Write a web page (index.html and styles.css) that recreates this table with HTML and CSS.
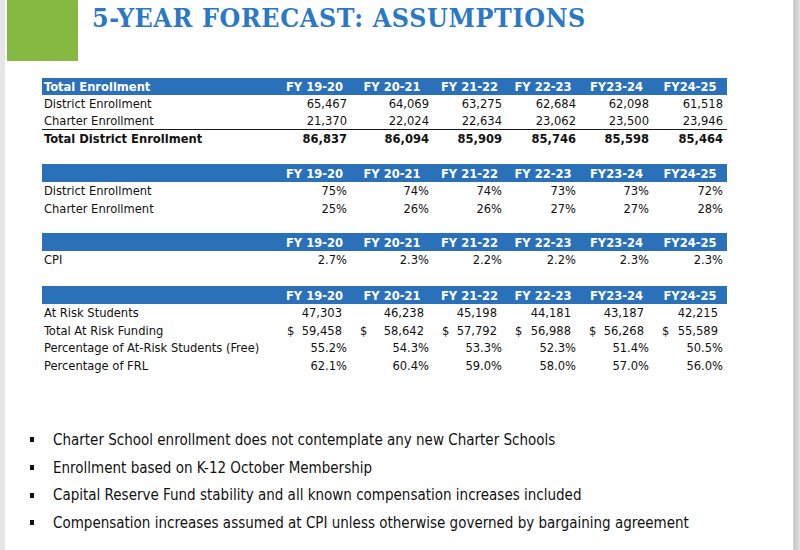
FILE: index.html
```html
<!DOCTYPE html>
<html>
<head>
<meta charset="utf-8">
<link rel="stylesheet" href="styles.css">
</head>
<body>
<div class="frame">
  <div class="edge-left"></div>
  <main class="slide">
    <header class="head">
      <div class="green-block"></div>
      <h1 class="title">5-YEAR FORECAST: ASSUMPTIONS</h1>
    </header>

    <table class="grid t1">
      <colgroup><col class="c-label"><col class="c1"><col class="c2"><col class="c3"><col class="c4"><col class="c5"><col class="c6"></colgroup>
      <thead>
        <tr><th class="lbl">Total Enrollment</th><th>FY 19-20</th><th>FY 20-21</th><th>FY 21-22</th><th>FY 22-23</th><th>FY23-24</th><th>FY24-25</th></tr>
      </thead>
      <tbody>
        <tr><td class="lbl">District Enrollment</td><td>65,467</td><td>64,069</td><td>63,275</td><td>62,684</td><td>62,098</td><td>61,518</td></tr>
        <tr class="underline"><td class="lbl">Charter Enrollment</td><td>21,370</td><td>22,024</td><td>22,634</td><td>23,062</td><td>23,500</td><td>23,946</td></tr>
        <tr class="total"><td class="lbl">Total District Enrollment</td><td>86,837</td><td>86,094</td><td>85,909</td><td>85,746</td><td>85,598</td><td>85,464</td></tr>
      </tbody>
    </table>

    <table class="grid t2">
      <colgroup><col class="c-label"><col class="c1"><col class="c2"><col class="c3"><col class="c4"><col class="c5"><col class="c6"></colgroup>
      <thead>
        <tr><th class="lbl"></th><th>FY 19-20</th><th>FY 20-21</th><th>FY 21-22</th><th>FY 22-23</th><th>FY23-24</th><th>FY24-25</th></tr>
      </thead>
      <tbody>
        <tr><td class="lbl">District Enrollment</td><td>75%</td><td>74%</td><td>74%</td><td>73%</td><td>73%</td><td>72%</td></tr>
        <tr><td class="lbl">Charter Enrollment</td><td>25%</td><td>26%</td><td>26%</td><td>27%</td><td>27%</td><td>28%</td></tr>
      </tbody>
    </table>

    <table class="grid t3">
      <colgroup><col class="c-label"><col class="c1"><col class="c2"><col class="c3"><col class="c4"><col class="c5"><col class="c6"></colgroup>
      <thead>
        <tr><th class="lbl"></th><th>FY 19-20</th><th>FY 20-21</th><th>FY 21-22</th><th>FY 22-23</th><th>FY23-24</th><th>FY24-25</th></tr>
      </thead>
      <tbody>
        <tr><td class="lbl">CPI</td><td>2.7%</td><td>2.3%</td><td>2.2%</td><td>2.2%</td><td>2.3%</td><td>2.3%</td></tr>
      </tbody>
    </table>

    <table class="grid t4">
      <colgroup><col class="c-label"><col class="c1"><col class="c2"><col class="c3"><col class="c4"><col class="c5"><col class="c6"></colgroup>
      <thead>
        <tr><th class="lbl"></th><th>FY 19-20</th><th>FY 20-21</th><th>FY 21-22</th><th>FY 22-23</th><th>FY23-24</th><th>FY24-25</th></tr>
      </thead>
      <tbody>
        <tr class="acct"><td class="lbl">At Risk Students</td><td>47,303</td><td>46,238</td><td>45,198</td><td>44,181</td><td>43,187</td><td>42,215</td></tr>
        <tr class="acct"><td class="lbl">Total At Risk Funding</td>
          <td><span class="money"><span>$</span><span>59,458</span></span></td>
          <td><span class="money"><span>$</span><span>58,642</span></span></td>
          <td><span class="money"><span>$</span><span>57,792</span></span></td>
          <td><span class="money"><span>$</span><span>56,988</span></span></td>
          <td><span class="money"><span>$</span><span>56,268</span></span></td>
          <td><span class="money"><span>$</span><span>55,589</span></span></td>
        </tr>
        <tr><td class="lbl">Percentage of At-Risk Students (Free)</td><td>55.2%</td><td>54.3%</td><td>53.3%</td><td>52.3%</td><td>51.4%</td><td>50.5%</td></tr>
        <tr><td class="lbl">Percentage of FRL</td><td>62.1%</td><td>60.4%</td><td>59.0%</td><td>58.0%</td><td>57.0%</td><td>56.0%</td></tr>
      </tbody>
    </table>

    <ul class="notes">
      <li>Charter School enrollment does not contemplate any new Charter Schools</li>
      <li>Enrollment based on K-12 October Membership</li>
      <li>Capital Reserve Fund stability and all known compensation increases included</li>
      <li>Compensation increases assumed at CPI unless otherwise governed by bargaining agreement</li>
    </ul>
  </main>
  <div class="edge-right"></div>
</div>
</body>
</html>
```

FILE: styles.css
```css
* { box-sizing: border-box; }
html, body {
  margin: 0;
  padding: 0;
  background: #ffffff;
}
.frame {
  display: flex;
  width: 800px;
  height: 550px;
  overflow: hidden;
}
.edge-left {
  width: 5px;
  flex: none;
  background: #e6e6e6;
}
.edge-right {
  width: 7px;
  flex: none;
  background: linear-gradient(to right, #d4d4d4 0, #c9c9c9 2px, #d6d6d6 4px, #e2e2e2 7px);
}
.slide {
  flex: 1;
  background: #ffffff;
  display: flex;
  flex-direction: column;
}
.head {
  display: flex;
  align-items: flex-start;
  height: 61px;
}
.green-block {
  width: 71px;
  height: 61px;
  margin-left: 2px;
  background: #85b941;
  flex: none;
}
.title {
  margin: 0 0 0 14px;
  padding-top: 3px;
  font-family: "DejaVu Serif Condensed", "DejaVu Serif", "Liberation Serif", serif;
  font-weight: bold;
  font-size: 26.5px;
  letter-spacing: 0.65px;
  line-height: 30px;
  color: #2b78c4;
  white-space: nowrap;
}
.grid {
  margin-left: 37px;
  width: 685px;
  table-layout: fixed;
  border-collapse: collapse;
  font-family: "DejaVu Sans Condensed", "DejaVu Sans", sans-serif;
  font-size: 12.8px;
  color: #111111;
}
.t1 { margin-top: 17px; }
.t2 { margin-top: 17px; }
.t3 { margin-top: 16px; }
.t4 { margin-top: 17.5px; }
.c-label { width: 236px; }
.c1 { width: 73px; }
.c2 { width: 82px; }
.c3 { width: 73px; }
.c4 { width: 74px; }
.c5 { width: 73px; }
.c6 { width: 74px; }
.grid th {
  background: #2b71b9;
  color: #ffffff;
  font-weight: bold;
  height: 18px;
  padding: 0;
  text-align: center;
  white-space: nowrap;
}
.t1 th { height: 16.5px; }
.grid th.lbl {
  text-align: left;
  padding-left: 2px;
}
.grid td {
  height: 17.5px;
  padding: 0 4px 0 0;
  text-align: right;
  white-space: nowrap;
  line-height: 15px;
}
.grid td.lbl {
  text-align: left;
  padding-left: 2px;
}
.grid tr.underline td {
  border-bottom: 1.5px solid #1a1a1a;
}
.grid tr.total td {
  font-weight: bold;
}
.grid tr.acct td { padding-right: 9px; }
.grid tr.acct td.lbl { padding-right: 0; }
.money {
  display: flex;
  justify-content: space-between;
  padding-left: 9px;
}
.notes {
  list-style: none;
  margin: 52px 0 0 0;
  padding: 0;
  font-family: "DejaVu Sans Condensed", "DejaVu Sans", sans-serif;
  font-size: 15px;
  color: #111111;
}
.notes li {
  display: flex;
  align-items: center;
  height: 27.7px;
  padding-left: 25px;
}
.notes li::before {
  content: "";
  width: 4px;
  height: 5px;
  background: #111111;
  margin-right: 19px;
  flex: none;
}
```
